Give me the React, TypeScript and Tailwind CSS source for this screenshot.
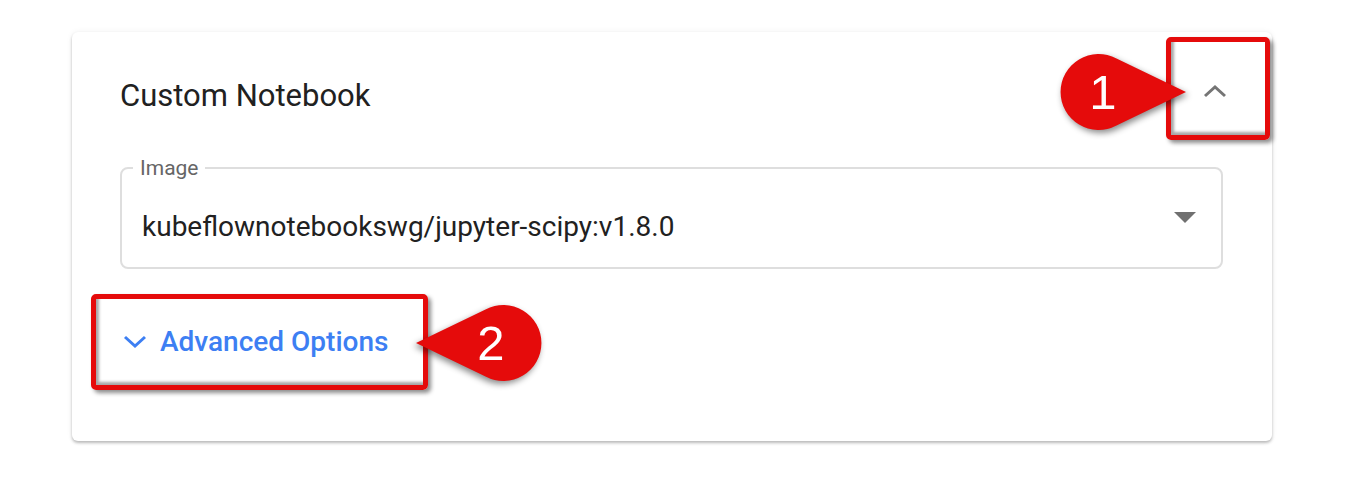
import React from 'react';

const RED = '#e50b0b';

const Callout = ({ n, className, flip = false }: { n: string; className: string; flip?: boolean }) => (
  <div className={`absolute ${className}`}>
    <svg
      width="132"
      height="84"
      viewBox="0 0 132 84"
      className="drop-shadow-[2px_3px_3px_rgba(0,0,0,0.45)]"
      style={flip ? { transform: 'scaleX(-1)' } : undefined}
    >
      <path d="M127 42 L57.5 8.5 A38 38 0 1 0 57.5 75.5 Z" fill={RED} />
    </svg>
    <span
      className={`absolute top-0 h-[84px] flex items-center justify-center text-white text-[49px] leading-none font-['Liberation_Sans',Arial,sans-serif] ${
        flip ? 'right-0 w-[104px]' : 'left-0 w-[88px]'
      }`}
    >
      {n}
    </span>
  </div>
);

const Highlight = ({ className }: { className: string }) => (
  <div
    className={`absolute rounded-[5px] border-[5px] border-[#e50b0b] shadow-[3px_3px_4px_rgba(0,0,0,0.45),inset_3px_-3px_3px_rgba(0,0,0,0.35)] ${className}`}
  />
);

export default function App() {
  return (
    <div className="relative w-[1358px] h-[480px] bg-white font-['Roboto','Noto_Sans',sans-serif]">
      <div className="pt-[32px] pl-[72px]">
        <div className="w-[1200px] bg-white rounded-[6px] shadow-[0_2px_3px_rgba(0,0,0,0.25),0_0_6px_rgba(0,0,0,0.06)] pl-[48px] pr-[49px] pt-[40px] pb-[75px]">
          <div className="flex items-center justify-between h-12">
            <h2 className="text-[31px] text-[#212121] font-normal">Custom Notebook</h2>
            <button className="w-12 h-12 -mr-[16px] -mt-[10px] flex items-center justify-center">
              <svg width="24" height="14" viewBox="0 0 24 14">
                <polyline points="2,12 12,3 22,12" fill="none" stroke="#757575" strokeWidth="3" />
              </svg>
            </button>
          </div>

          <fieldset className="mt-[37px] h-[112px] border-2 border-[#dedede] rounded-[8px] px-[12px] flex items-center">
            <legend className="px-[7px] ml-[-1px] text-[21px] text-[#666] leading-[22px]">Image</legend>
            <div className="flex items-center justify-between w-full -mt-[10px]">
              <span className="text-[28px] text-[#212121] pl-[8px] translate-y-[9px]">
                kubeflownotebookswg/jupyter-scipy:v1.8.0
              </span>
              <svg width="22" height="12" viewBox="0 0 22 12" className="mr-[13px]">
                <path d="M0 0 L22 0 L11 11 Z" fill="#707070" />
              </svg>
            </div>
          </fieldset>

          <div className="mt-[49px] h-12 flex items-center gap-[13px] text-[#3d7ff3]">
            <svg width="24" height="14" viewBox="0 0 24 14" className="ml-[3px]">
              <polyline points="2,2 12,11 22,2" fill="none" stroke="#3d7ff3" strokeWidth="3" />
            </svg>
            <span className="text-[28px] font-medium">Advanced Options</span>
          </div>
        </div>
      </div>

      <Highlight className="left-[1166px] top-[37px] w-[104px] h-[103px]" />
      <Highlight className="left-[91px] top-[294px] w-[337px] h-[96px]" />
      <Callout n="1" className="left-[1059px] top-[50px]" />
      <Callout n="2" flip className="left-[411px] top-[301px]" />
    </div>
  );
}
